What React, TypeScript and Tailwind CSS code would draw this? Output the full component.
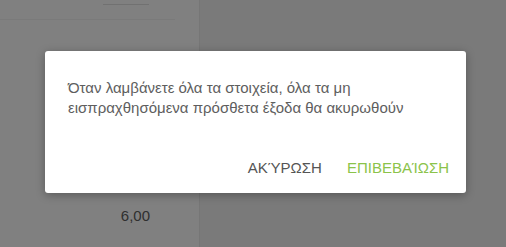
import React from "react";

export default function App() {
	return (
		<div
			className="relative flex w-[506px] h-[247px] overflow-hidden"
			style={{ fontFamily: '"Liberation Sans", Arial, sans-serif' }}
		>
			{/* page behind the backdrop */}
			<div className="w-[200px] h-full bg-[#808080] border-r border-[#767676] flex flex-col">
				<div className="h-[20px] border-b border-[#7a7a7a] w-[175px] relative">
					<div className="absolute left-[103px] top-[4px] w-[46px] h-px bg-[#717171]" />
				</div>
				<div className="flex-1" />
				<div className="w-[150px] text-right text-[15px] text-[#2f2f2f] pb-[20px]">6,00</div>
			</div>
			<div className="flex-1 h-full bg-[#7a7a7a]" />

			{/* dialog */}
			<div className="absolute inset-0 pl-[45px] pt-[51px]">
				<div className="w-[421px] h-[142px] bg-white rounded-[3px] shadow-[0_2px_10px_rgba(0,0,0,0.3)] flex flex-col">
					<div className="px-[23px] pt-[27px] text-[15px] leading-[20px] text-[#5e5e5e]">
						Όταν λαμβάνετε όλα τα στοιχεία, όλα τα μη εισπραχθησόμενα πρόσθετα έξοδα θα ακυρωθούν
					</div>
					<div className="flex-1" />
					<div className="flex justify-end items-center gap-[25px] pr-[17px] pb-[14px] text-[15px]">
						<button type="button" className="text-[#555555]">ΑΚΎΡΩΣΗ</button>
						<button type="button" className="text-[#8bc34a]">ΕΠΙΒΕΒΑΊΩΣΗ</button>
					</div>
				</div>
			</div>
		</div>
	);
}
